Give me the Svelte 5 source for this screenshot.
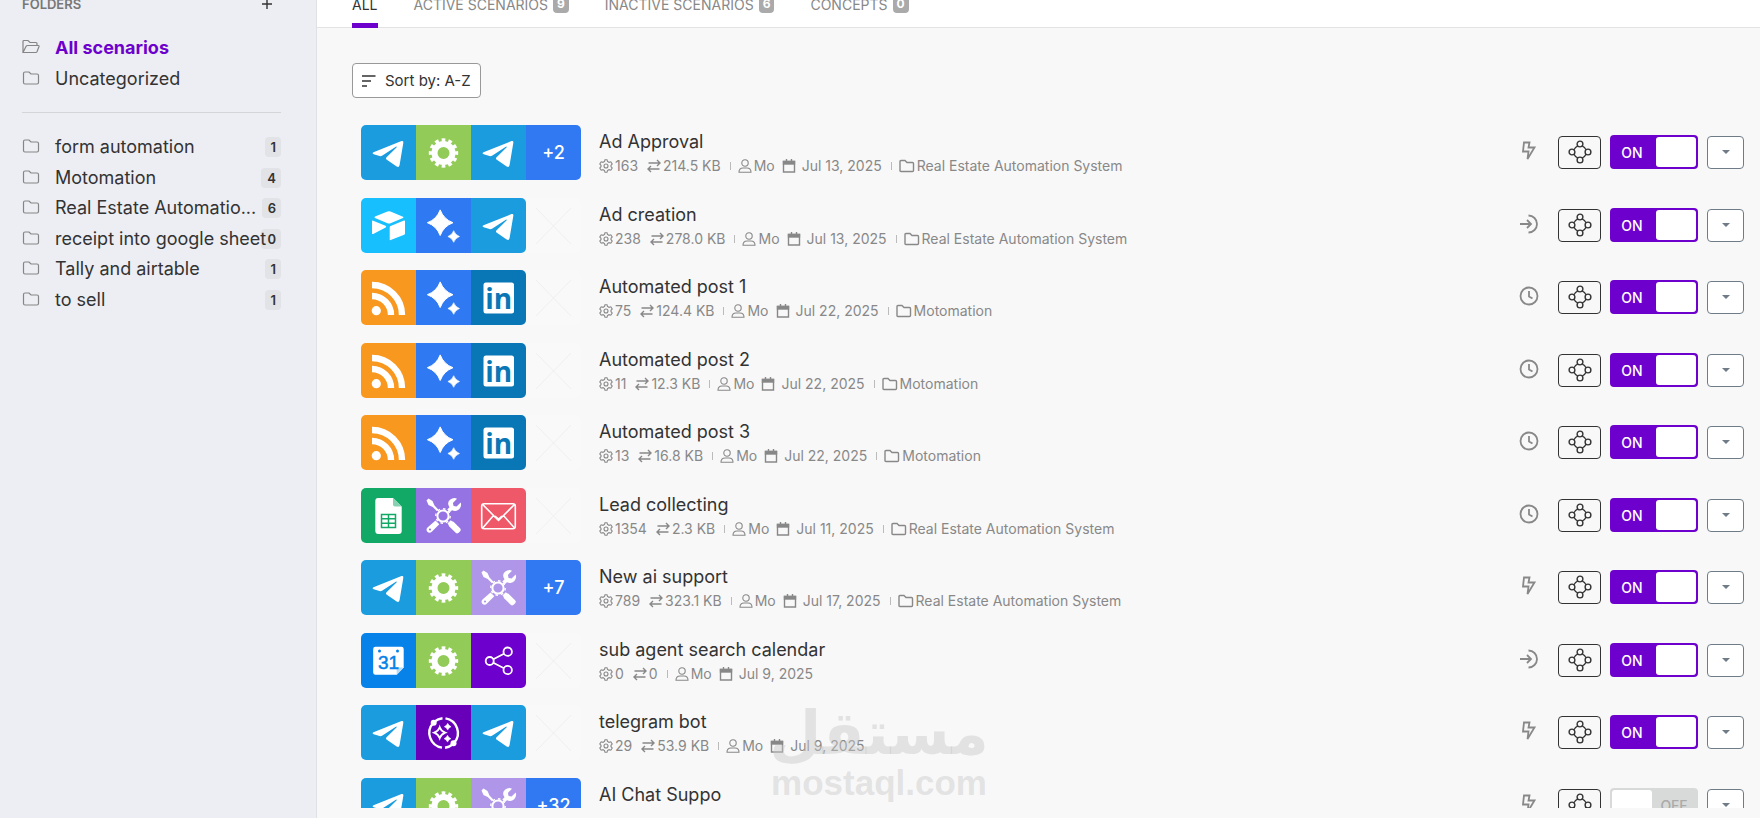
<script>
  const pinned = [
    { name: 'All scenarios', open: true },
    { name: 'Uncategorized', open: false }
  ];

  const folders = [
    { name: 'form automation', count: 1 },
    { name: 'Motomation', count: 4 },
    { name: 'Real Estate Automation System', count: 6 },
    { name: 'receipt into google sheet', count: 0 },
    { name: 'Tally and airtable', count: 1 },
    { name: 'to sell', count: 1 }
  ];

  const tabs = [
    { label: 'All' },
    { label: 'Active scenarios', count: 9 },
    { label: 'Inactive scenarios', count: 6 },
    { label: 'Concepts', count: 0 }
  ];

  const estate = 'Real Estate Automation System';

  let scenarios = $state([
    { name: 'Ad Approval', apps: ['telegram', 'gear', 'telegram'], more: 2, ops: '163', size: '214.5 KB', date: 'Jul 13, 2025', folder: estate, trigger: 'bolt', on: true },
    { name: 'Ad creation', apps: ['airtable', 'gemini', 'telegram'], ops: '238', size: '278.0 KB', date: 'Jul 13, 2025', folder: estate, trigger: 'enter', on: true },
    { name: 'Automated post 1', apps: ['rss', 'gemini', 'linkedin'], ops: '75', size: '124.4 KB', date: 'Jul 22, 2025', folder: 'Motomation', trigger: 'clock', on: true },
    { name: 'Automated post 2', apps: ['rss', 'gemini', 'linkedin'], ops: '11', size: '12.3 KB', date: 'Jul 22, 2025', folder: 'Motomation', trigger: 'clock', on: true },
    { name: 'Automated post 3', apps: ['rss', 'gemini', 'linkedin'], ops: '13', size: '16.8 KB', date: 'Jul 22, 2025', folder: 'Motomation', trigger: 'clock', on: true },
    { name: 'Lead collecting', apps: ['sheets', 'tools', 'mail'], ops: '1354', size: '2.3 KB', date: 'Jul 11, 2025', folder: estate, trigger: 'clock', on: true },
    { name: 'New ai support', apps: ['telegram', 'gear', 'tools-light'], more: 7, ops: '789', size: '323.1 KB', date: 'Jul 17, 2025', folder: estate, trigger: 'bolt', on: true },
    { name: 'sub agent search calendar', apps: ['calendar', 'gear', 'share'], ops: '0', size: '0', date: 'Jul 9, 2025', trigger: 'enter', on: true },
    { name: 'telegram bot', apps: ['telegram', 'agent', 'telegram'], ops: '29', size: '53.9 KB', date: 'Jul 9, 2025', trigger: 'bolt', on: true },
    { name: 'AI Chat Suppo', apps: ['telegram', 'gear', 'tools-light'], more: 32, trigger: 'bolt', on: false }
  ]);

  function shorten(name) {
    return name.length > 25 ? name.slice(0, 21) + '...' : name;
  }

  // four-pointed star centred on x, y
  function star(x, y, r) {
    const k = r * 0.27;
    return `M${x} ${y - r}Q${x + k} ${y - k} ${x + r} ${y}Q${x + k} ${y + k} ${x} ${y + r}Q${x - k} ${y + k} ${x - r} ${y}Q${x - k} ${y - k} ${x} ${y - r}Z`;
  }
</script>

{#snippet folderIcon(open)}
  <svg class="line" viewBox="0 0 18 16" width="18" height="16" aria-hidden="true">
    {#if open}
      <path d="M1 13.5V2.5Q1 1.5 2 1.5H6L8 3.5H14Q15 3.5 15 4.5V6.5M1 13.5L4 7.5Q4.5 6.5 5.5 6.5H16.3Q17.3 6.5 17 7.5L15 12.7Q14.6 13.5 13.8 13.5H1Z" />
    {:else}
      <path d="M3 2H7L9 4H15Q16.5 4 16.5 5.5V12.5Q16.5 14 15 14H3Q1.5 14 1.5 12.5V3.5Q1.5 2 3 2Z" />
    {/if}
  </svg>
{/snippet}

{#snippet appIcon(app)}
  <svg viewBox="0 0 55 55" width="55" height="55" fill="#fff" aria-hidden="true">
    {#if app === 'telegram'}
      <path d="M12.5 27.3L40.5 16.1Q42.8 15.4 42.3 18L38.6 40Q38 43 35.3 41.2L25.5 34.5Q24.3 33.6 25.5 32.3L35.5 22.5Q36.5 21 34.5 22L21 30.7Q19.8 31.4 18.5 31L12.7 29.3Q10.6 28.4 12.5 27.3Z" />
    {:else if app === 'gear'}
      <circle cx="27.5" cy="28" r="9" fill="none" stroke="#fff" stroke-width="6" />
      <circle cx="27.5" cy="28" r="13" fill="none" stroke="#fff" stroke-width="3.4" pathLength="24" stroke-dasharray="1.1 .9" stroke-dashoffset=".55" />
    {:else if app === 'airtable'}
      <path d="M14 18.5L26.5 13.6Q28 13 29.5 13.6L42 18.7Q43 19.3 42 19.9L29.5 25.2Q28 25.8 26.5 25.2L14 20Q13 19.2 14 18.5ZM11 23.5Q11 22.3 12.2 22.7L24.5 27.7Q26 28.5 24.7 29.4L12.2 35.9Q11 36.5 11 35.2ZM28.7 29.5Q28.7 28.5 29.6 28.1L43 22.5Q44 22.2 44 23.2V35.5Q44 36.4 43.2 36.8L29.7 42.1Q28.7 42.5 28.7 41.4Z" />
    {:else if app === 'gemini'}
      <path d={star(24.2, 24.7, 12.8)} stroke="#fff" stroke-linejoin="round" />
      <path d={star(37.7, 38.5, 5.8)} stroke="#fff" stroke-width=".6" stroke-linejoin="round" />
    {:else if app === 'rss'}
      <circle cx="15.3" cy="40.7" r="4.6" />
      <path d="M11 15A30 30 0 0 1 41 45M11 26A19 19 0 0 1 30 45" fill="none" stroke="#fff" stroke-width="6.4" />
    {:else if app === 'linkedin'}
      <rect x="12.5" y="12.5" width="30.5" height="31" rx="2.5" />
      <text class="li" x="27.7" y="39" text-anchor="middle">in</text>
    {:else if app === 'sheets'}
      <path d="M17 10H32L40.7 18.5V43Q40.7 46 37.7 46H17.3Q14.3 46 14.3 43V13Q14.3 10 17 10Z" />
      <path d="M32 10V16.5Q32 18.5 34 18.5H40.7Z" fill="#87d0b1" />
      <path d="M20.5 26.5H34.5V39.5H20.5ZM20.5 30.8H34.5M20.5 35.2H34.5M27.5 26.5V39.5" fill="none" stroke="#12a866" stroke-width="1.5" />
    {:else if app === 'tools' || app === 'tools-light'}
      <path d="M10.5 12.5L12.5 10.5L16.5 13L18.5 17.5L22.5 21.8L21 23.3L16.7 19L12.5 17Z" />
      <path d="M31.3 21.5L33.5 19.3Q30.5 15 34 11.8Q37.5 9 41 10.7L36.9 14.9L37.6 17.9L40.6 18.6L44.7 14.5Q46 18 43.2 21.2Q40 24.2 36 22.2L33.8 24.3Z" />
      <path d="M19.5 32.5L23.3 36.2L16 43.6Q13.5 46 11.3 43.7Q9.5 41.5 11.8 39.3ZM31.5 35.5L34.7 32.3Q36 33.5 37.5 33.7L44.3 40.5Q45.5 42 44 43.5L42.3 45Q41 46 39.7 44.8L33 38.2Q32.8 36.8 31.5 35.5Z" />
      <circle cx="27" cy="28" r="5.6" fill="none" stroke="#fff" stroke-width="2" />
      <circle cx="27" cy="28" r="7.2" fill="none" stroke="#fff" stroke-width="1.4" pathLength="16" stroke-dasharray=".9 1.1" />
      <circle class={app} cx="14" cy="41.5" r="1.1" />
    {:else if app === 'mail'}
      <g fill="none" stroke="#fff" stroke-width="1.6" stroke-linejoin="round">
        <rect x="10.7" y="15.7" width="33.6" height="25" rx="2.5" />
        <path d="M11.7 16.5L24.5 29.5L27.5 32.3L30.5 29.5L43.5 16.5M24 28L27.5 31L31 28M11.7 40L22.5 27.5M43.5 40L32.5 27.5" />
      </g>
    {:else if app === 'calendar'}
      <path d="M14.5 13.7H40.5Q42.7 13.7 42.7 16V34.5L35.7 41.7H14.5Q12.2 41.7 12.2 39.5V16Q12.2 13.7 14.5 13.7Z" />
      <path d="M35.7 41.7V34.5H42.7Z" fill="#b8daf8" />
      <circle cx="18.5" cy="18" r="1.5" fill="#0782e8" />
      <circle cx="36.5" cy="18" r="1.5" fill="#0782e8" />
      <text class="day" x="27.5" y="36" text-anchor="middle">31</text>
    {:else if app === 'share'}
      <g fill="none" stroke="#fff" stroke-width="1.8">
        <circle cx="18.7" cy="28" r="4" />
        <circle cx="36.7" cy="18.7" r="4.2" />
        <circle cx="36.7" cy="37" r="4.2" />
        <path d="M22.3 26.2L33 20.7M22.3 29.8L33 35.2" />
      </g>
    {:else if app === 'agent'}
      <path d="M17.2 18A14.8 14.8 0 0 0 26 42.6M38 38A14.8 14.8 0 0 0 29.5 13.4M18.5 16.7A14.8 14.8 0 0 1 26.5 13.2M36.5 39.5A14.8 14.8 0 0 1 29 42.7" fill="none" stroke="#fff" stroke-width="2.4" />
      <circle cx="17.7" cy="17.8" r="3" />
      <circle cx="37.5" cy="38.2" r="3" />
      <path d={star(23.7, 27.7, 5.5)} fill="none" stroke="#fff" stroke-width="1.8" />
      <path d={star(31.7, 21.7, 3.4)} stroke="#fff" stroke-width=".5" />
      <path d={star(31.5, 33.7, 3.4)} stroke="#fff" stroke-width=".5" />
    {/if}
  </svg>
{/snippet}

{#snippet triggerIcon(kind)}
  <svg class="trigger" viewBox="0 0 20 20" width="20" height="20" aria-hidden="true">
    {#if kind === 'bolt'}
      <path d="M5 1.5H10.5L9.5 6.5H15.5L8.5 18L9.5 10.5H4Z" />
    {:else if kind === 'enter'}
      <path d="M1 10H12M8 6L12 10L8 14M9.5 1.5A8.5 8.5 0 0 1 9.5 18.5" />
    {:else}
      <circle cx="10" cy="10" r="8.5" />
      <path d="M10 5V10.5L13.5 12.5" />
    {/if}
  </svg>
{/snippet}

<div class="shell">
  <aside>
    <div class="heading">
      <h2>Folders</h2>
      <button class="add" aria-label="Add folder">
        <svg viewBox="0 0 12 12" width="12" height="12"><path d="M6 1V11M1 6H11" /></svg>
      </button>
    </div>
    <ul>
      {#each pinned as item}
        <li><a href="#folders" class:current={item.open}>{@render folderIcon(item.open)}<span class="name">{item.name}</span></a></li>
      {/each}
    </ul>
    <hr />
    <ul>
      {#each folders as folder}
        <li>
          <a href="#folders" title={folder.name}>
            {@render folderIcon(false)}
            <span class="name">{shorten(folder.name)}</span>
            <span class="count">{folder.count}</span>
          </a>
        </li>
      {/each}
    </ul>
  </aside>

  <main>
    <nav>
      {#each tabs as tab, i}
        <a href="#tabs" class:active={i === 0}>{tab.label}{#if tab.count !== undefined}<span class="pill">{tab.count}</span>{/if}</a>
      {/each}
    </nav>

    <div class="content">
      <button class="sort">
        <svg viewBox="0 0 14 12" width="14" height="12" aria-hidden="true"><path d="M0 1H13.5M0 6H9M0 11H5" /></svg>
        Sort by: A-Z
      </button>

      <ul class="list">
        {#each scenarios as s}
          <li class="row">
            <div class="apps">
              {#each s.apps as app, i}
                <span class="tile {app}" class:last={i === 2 && !s.more}>{@render appIcon(app)}</span>
              {/each}
              {#if s.more}
                <span class="tile more">+{s.more}</span>
              {:else}
                <span class="tile empty">
                  <svg viewBox="0 0 55 55" width="55" height="55" aria-hidden="true"><path d="M10 10L45 46M45 10L10 46" /></svg>
                </span>
              {/if}
            </div>

            <div class="info">
              <h3>{s.name}</h3>
              {#if s.date}
                <p>
                  <svg viewBox="0 0 14 14" width="14" height="14" aria-hidden="true">
                    <path d="M5.5 2.5L6 .7H8L8.5 2.5L10 3.3L11.8 2.8L13.2 5L12 6.3V7.7L13.2 9L11.8 11.2L10 10.7L8.5 11.5L8 13.3H6L5.5 11.5L4 10.7L2.2 11.2L.8 9L2 7.7V6.3L.8 5L2.2 2.8L4 3.3Z" />
                    <circle cx="7" cy="7" r="2" />
                  </svg>
                  <span class="ops">{s.ops}</span>
                  <svg class="swap" viewBox="0 0 14 14" width="14" height="14" aria-hidden="true"><path d="M1.5 4H13M10 1L13 4L10 7M12.5 10H1M4 7L1 10L4 13" /></svg>
                  <span>{s.size}</span>
                  <i></i>
                  <svg viewBox="0 0 14 14" width="14" height="14" aria-hidden="true"><circle cx="7" cy="4" r="3.2" /><path d="M1 13.3Q1 9 5 9H9Q13 9 13 13.3Z" /></svg>
                  <span class="owner">Mo</span>
                  <svg class="cal" viewBox="0 0 14 14" width="14" height="14" aria-hidden="true"><path d="M1.5 2.5H12.5V13H1.5ZM4.5 0V3M9.5 0V3" /><rect x="1.5" y="2.5" width="11" height="2.5" /></svg>
                  <span class="date">{s.date}</span>
                  {#if s.folder}
                    <i></i>
                    <svg class="dir" viewBox="0 0 16 14" width="16" height="14" aria-hidden="true"><path d="M2 1.5H6L8 3.5H13.5Q14.5 3.5 14.5 4.5V11.5Q14.5 12.5 13.5 12.5H2Q1 12.5 1 11.5V2.5Q1 1.5 2 1.5Z" /></svg>
                    <span>{s.folder}</span>
                  {/if}
                </p>
              {/if}
            </div>

            <div class="actions">
              {@render triggerIcon(s.trigger)}
              <button class="nodes" aria-label="Open {s.name}">
                <svg viewBox="0 0 24 24" width="24" height="24">
                  <circle cx="12" cy="12" r="6.3" />
                  <g class="dots">
                    <circle cx="12" cy="4" r="2.9" />
                    <circle cx="20" cy="12" r="2.9" />
                    <circle cx="12" cy="20" r="2.9" />
                    <circle cx="4" cy="12" r="2.9" />
                  </g>
                </svg>
              </button>
              <label class="switch" class:off={!s.on}>
                <input type="checkbox" role="switch" aria-label="{s.name} enabled" bind:checked={s.on} />
                <span class="state">{s.on ? 'ON' : 'OFF'}</span>
                <span class="knob"></span>
              </label>
              <button class="menu" aria-label="More options for {s.name}"></button>
            </div>
          </li>
        {/each}
      </ul>
    </div>
  </main>

  <div class="watermark" aria-hidden="true">
    <span class="arabic" lang="ar">مستقل</span>
    <span class="latin">mostaql.com</span>
  </div>
</div>

<style>
  :global(body) {
    margin: 0;
    overflow: hidden;
  }

  .shell {
    position: relative;
    display: flex;
    height: 100vh;
    overflow: hidden;
    background: #f8f8f8;
    color: #333;
    font-family: Inter, "Liberation Sans", sans-serif;
  }

  ul {
    list-style: none;
    margin: 0;
    padding: 0;
  }

  a {
    color: inherit;
    text-decoration: none;
  }

  button {
    padding: 0;
    font: inherit;
    color: inherit;
    cursor: pointer;
  }

  svg {
    flex: none;
    display: block;
  }

  /* sidebar */
  aside {
    box-sizing: border-box;
    flex: 0 0 317px;
    min-width: 0;
    padding: 0 35px 0 22px;
    background: #edeef3;
    border-right: 1px solid #e0e1e5;
  }

  .heading {
    display: flex;
    justify-content: space-between;
    align-items: center;
    height: 24px;
    margin: -8px 8px 16px 0;
  }

  h2 {
    margin: 0;
    font-size: 13px;
    font-weight: 600;
    text-transform: uppercase;
    color: #777;
  }

  .add {
    border: 0;
    background: none;
  }

  .add path {
    stroke: #333;
    stroke-width: 1.4;
  }

  aside li {
    height: 31px;
  }

  aside li:nth-child(even) {
    height: 30px;
  }

  aside li a {
    position: relative;
    display: flex;
    align-items: center;
    height: 30px;
    font-size: 18px;
  }

  aside .line {
    margin-right: 15px;
    fill: none;
    stroke: #858585;
    stroke-width: 1.2;
  }

  .current {
    font-weight: 700;
    color: #6d00cc;
  }

  .name {
    position: relative;
    z-index: 1;
    white-space: nowrap;
  }

  hr {
    height: 1px;
    margin: 19px 0 18px;
    border: 0;
    background: #d4d5d6;
  }

  .count {
    position: absolute;
    right: 0;
    top: 6px;
    padding: 0 5px 0 6px;
    border-radius: 4px;
    background: #e2e3e7;
    font-size: 13px;
    font-weight: 600;
    line-height: 20px;
  }

  /* main pane */
  main {
    flex: 1;
    min-width: 0;
    display: flex;
    flex-direction: column;
    padding-bottom: 10px;
  }

  nav {
    display: flex;
    gap: 36px;
    height: 27px;
    padding-left: 35px;
    background: #fff;
    border-bottom: 1px solid #e3e3e3;
  }

  nav a {
    display: flex;
    align-items: center;
    height: 24px;
    margin-top: -8px;
    padding-bottom: 7px;
    font-size: 14px;
    text-transform: uppercase;
    color: #888;
    border-bottom: 5px solid transparent;
  }

  nav a.active {
    color: #333;
    border-color: #6d00cc;
  }

  .pill {
    margin-left: 5px;
    padding: 0 4px;
    border-radius: 4px;
    background: #aaa;
    color: #fff;
    font-size: 12px;
    font-weight: 700;
    line-height: 18px;
  }

  .content {
    flex: 1;
    min-height: 0;
    overflow: hidden;
    padding: 35px 16px 0 35px;
  }

  .sort {
    display: flex;
    align-items: center;
    gap: 9px;
    height: 35px;
    padding: 0 9px;
    border: 1px solid #999;
    border-radius: 4px;
    background: #fff;
    font-size: 15px;
  }

  .sort path {
    stroke: #333;
    stroke-width: 1.6;
  }

  .list {
    margin-top: 27px;
    padding-left: 9px;
  }

  .row {
    display: flex;
    align-items: flex-start;
    height: 73px;
  }

  .row:nth-child(even) {
    height: 72px;
  }

  .apps {
    display: flex;
  }

  .tile {
    display: flex;
    align-items: center;
    justify-content: center;
    width: 55px;
    height: 55px;
    overflow: hidden;
  }

  .tile:first-child {
    border-radius: 5px 0 0 5px;
  }

  .tile:last-child,
  .tile.last {
    border-radius: 0 5px 5px 0;
  }

  .telegram { background: #1a9cde; }
  .gear { background: #92cb57; }
  .airtable { background: #18bfff; }
  .gemini { background: #2f7af3; }
  .rss { background: #f9981e; }
  .linkedin { background: #0977b6; }
  .sheets { background: #12a866; }
  .tools { background: #9673e3; fill: #9673e3; }
  .tools-light { background: #b096e9; fill: #b096e9; }
  .mail { background: #ee5869; }
  .calendar { background: #0782e8; }
  .share { background: #6d00cc; }
  .agent { background: #6800ba; }

  .more {
    background: #3079f2;
    color: #fff;
    font-size: 18px;
    font-weight: 500;
  }

  .empty {
    background: #f9f9f9;
  }

  .empty path {
    stroke: #f0f0f0;
  }

  .li {
    fill: #0977b6;
    font: bold 28px "Open Sans", sans-serif;
  }

  .day {
    fill: #0782e8;
    stroke: #0782e8;
    stroke-width: 0.5px;
    font: 19px "Liberation Sans", sans-serif;
  }

  .info {
    flex: 1;
    margin-left: 18px;
    padding-top: 5px;
  }

  h3 {
    margin: 0;
    font-size: 18px;
    font-weight: 400;
    line-height: 24px;
  }

  p {
    display: flex;
    align-items: center;
    gap: 2px;
    margin: 1px 0 0;
    font-size: 14px;
    line-height: 22px;
    color: #888;
  }

  p svg {
    fill: none;
    stroke: #888;
    stroke-width: 1.1;
  }

  p .swap,
  p .dir,
  p .cal {
    stroke-width: 1.4;
  }

  .cal rect {
    fill: #888;
  }

  .ops {
    margin-right: 7px;
  }

  .owner {
    margin-right: 5px;
  }

  .date {
    margin-left: 4px;
  }

  p i {
    width: 1px;
    height: 8px;
    margin: 0 5px 0 7px;
    background: #bbb;
  }

  .actions {
    display: flex;
    align-items: center;
    height: 54px;
  }

  .trigger {
    margin: 0 19px 3px 0;
    fill: none;
    stroke: #888;
    stroke-width: 1.8;
  }

  .nodes,
  .menu {
    display: flex;
    align-items: center;
    justify-content: center;
    box-sizing: border-box;
    height: 33px;
    border-radius: 4px;
  }

  .nodes {
    width: 43px;
    margin-right: 9px;
    border: 1px solid #333;
    background: none;
  }

  .nodes svg {
    fill: none;
    stroke: #333;
    stroke-width: 1.2;
  }

  .dots {
    fill: #f8f8f8;
    stroke-width: 1.4;
  }

  .switch {
    display: flex;
    box-sizing: border-box;
    width: 88px;
    height: 34px;
    margin-right: 9px;
    padding: 2px;
    border-radius: 4px;
    background: #6d00cc;
    color: #fff;
    font-size: 14px;
    font-weight: 500;
    cursor: pointer;
  }

  .switch input {
    appearance: none;
    width: 0;
    height: 0;
    margin: 0;
  }

  .state {
    flex: 1;
    padding-right: 4px;
    text-align: center;
    line-height: 32px;
  }

  .knob {
    width: 40px;
    border-radius: 3px;
    background: #fff;
  }

  .switch.off {
    flex-direction: row-reverse;
    background: #d8dad9;
    color: #aaa;
  }

  .off .state {
    padding: 0;
  }

  .menu {
    width: 37px;
    border: 1px solid #6f7b87;
    background: #fff;
  }

  .menu::after {
    content: "";
    border: 4px solid transparent;
    border-top-color: #6f7b87;
    border-bottom: 0;
  }

  .watermark {
    position: absolute;
    left: 773px;
    bottom: 15px;
    display: flex;
    flex-direction: column;
    align-items: center;
    width: 212px;
    color: rgba(200, 200, 200, 0.45);
    pointer-events: none;
  }

  .arabic {
    font: bold 60px/60px "DejaVu Sans", sans-serif;
  }

  .latin {
    font: bold 35px/40px "Liberation Sans", sans-serif;
  }
</style>
